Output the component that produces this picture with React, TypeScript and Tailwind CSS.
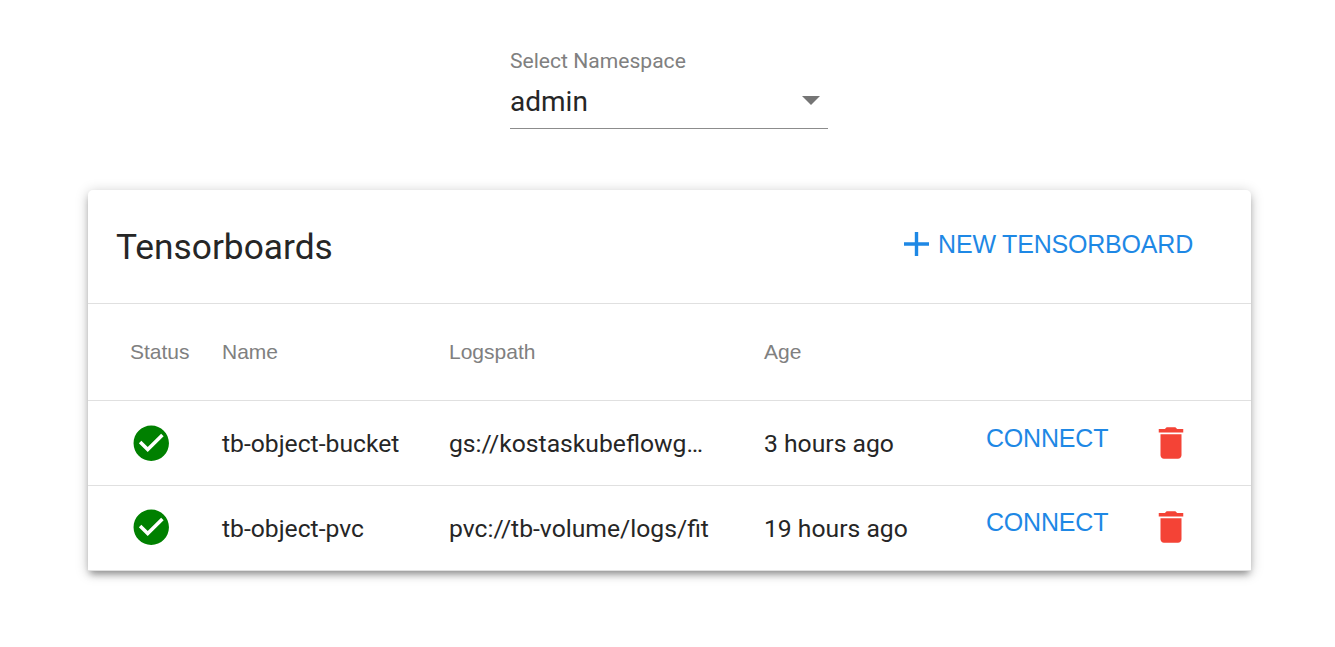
import React from "react";

const columns = "grid grid-cols-[92px_227px_315px_222px_164px_1fr] pl-[42px]";

const rows = [
  { name: "tb-object-bucket", path: "gs://kostaskubeflowg…", age: "3 hours ago" },
  { name: "tb-object-pvc", path: "pvc://tb-volume/logs/fit", age: "19 hours ago" },
];

function CheckIcon() {
  return (
    <svg viewBox="0 0 24 24" className="-ml-[0.5px] block size-[42.500px] group-last:-mt-[2px]" fill="#008000">
      <path d="M12 2C6.48 2 2 6.48 2 12s4.48 10 10 10 10-4.48 10-10S17.52 2 12 2zm-2 15l-5-5 1.41-1.41L10 14.17l7.59-7.59L19 8l-9 9z" />
    </svg>
  );
}

function TrashIcon() {
  return (
    <svg viewBox="0 0 24 24" className="block size-[42px] group-last:-mt-[2px]" fill="#f44336">
      <path d="M6 19c0 1.1.9 2 2 2h8c1.1 0 2-.9 2-2V7H6v12zM19 4h-3.500l-1-1h-5l-1 1H5v2h14V4z" />
    </svg>
  );
}

export default function App() {
  return (
    <main className="flex h-[647px] w-[1335px] flex-col bg-white font-['Roboto',sans-serif] text-[#262626]">
      <div className="ml-[510px] mt-[47px] flex h-[82px] w-[318px] flex-col border-b border-[#8c8c8c]">
        <label className="text-[21.1px] leading-[27px] text-[#808080]">Select Namespace</label>
        <div className="mt-[11px] flex items-center justify-between pr-2">
          <span className="mt-px text-[28px] leading-[32px]">admin</span>
          <svg viewBox="0 0 18 9" className="-mt-[3px] h-[9px] w-[18px]" fill="#757575"><path d="M0 0h18L9 9z" /></svg>
        </div>
      </div>
      <section className="ml-[88px] mt-[61px] w-[1163px] rounded-t-[5px] bg-white shadow-[0_5px_7px_-2px_rgba(0,0,0,0.34),0_2px_13px_rgba(0,0,0,0.22)]">
        <header className="flex h-[113px] items-center justify-between pl-[28px] pr-[58px]">
          <h1 className="mt-px text-[35.3px] leading-[42px]">Tensorboards</h1>
          <button className="-mt-[5px] flex items-center font-['Liberation_Sans',sans-serif] text-[25px] leading-[30px] tracking-[-0.2px] text-[#1e88e5]">
            <svg viewBox="0 0 25 24" className="mr-[9px] h-[24px] w-[25px]" fill="currentColor"><path d="M0 10.300h10.800V0h3.400v10.300H25v3.400H14.200V24h-3.400V13.700H0z" /></svg>
            NEW TENSORBOARD
          </button>
        </header>
        <div className={columns + " h-[97px] items-center border-t border-[#e0e0e0] font-['Liberation_Sans',sans-serif] text-[21px] text-[#808080]"}>
          <span>Status</span><span>Name</span><span>Logspath</span><span>Age</span>
        </div>
        {rows.map((row) => (
          <div key={row.name} className={columns + " group h-[85px] items-center border-t border-[#e0e0e0] text-[24.7px] last:h-[86px] last:border-b"}>
            <CheckIcon />
            <span className="mt-[2px]">{row.name}</span><span className="mt-[2px]">{row.path}</span><span className="mt-[2px]">{row.age}</span>
            <button className="-mt-[10px] text-left font-['Liberation_Sans',sans-serif] text-[25px] leading-[30px] tracking-[-0.2px] text-[#1e88e5] group-last:-mt-[12px]">CONNECT</button>
            <TrashIcon />
          </div>
        ))}
      </section>
    </main>
  );
}
